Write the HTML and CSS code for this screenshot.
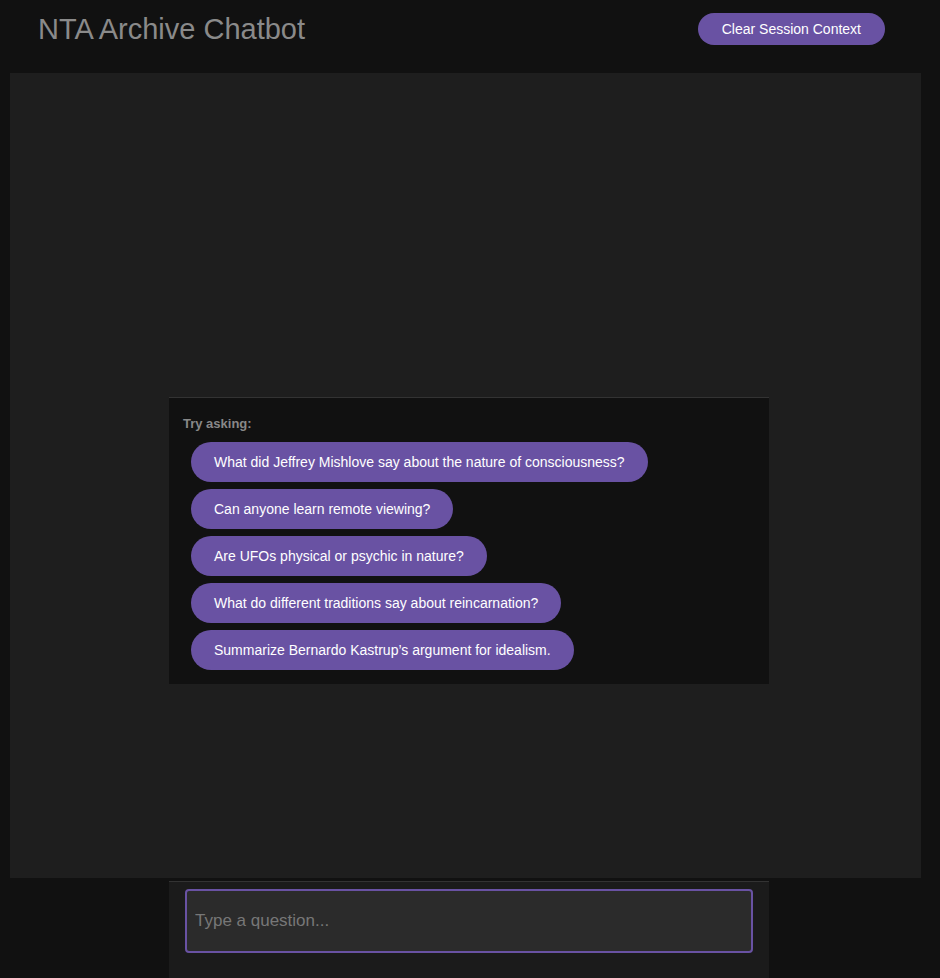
FILE: index.html
```html
<!DOCTYPE html>
<html lang="en">
<head>
<meta charset="utf-8">
<title>NTA Archive Chatbot</title>
<link rel="stylesheet" href="styles.css">
</head>
<body>
<header class="topbar">
  <h1 class="title">NTA Archive Chatbot</h1>
  <button class="clear-btn" type="button">Clear Session Context</button>
</header>
<main class="chat">
  <section class="suggestions">
    <div class="suggest-label">Try asking:</div>
    <div class="suggest-list">
      <button class="suggest" type="button">What did Jeffrey Mishlove say about the nature of consciousness?</button>
      <button class="suggest" type="button">Can anyone learn remote viewing?</button>
      <button class="suggest" type="button">Are UFOs physical or psychic in nature?</button>
      <button class="suggest" type="button">What do different traditions say about reincarnation?</button>
      <button class="suggest" type="button">Summarize Bernardo Kastrup’s argument for idealism.</button>
    </div>
  </section>
</main>
<footer class="composer">
  <input class="question" type="text" placeholder="Type a question..." autofocus>
</footer>
</body>
</html>
```
FILE: styles.css
```css
* { box-sizing: border-box; }
html, body {
  margin: 0;
  padding: 0;
  background: #111111;
  font-family: "Liberation Sans", Arial, sans-serif;
  overflow: hidden;
}
.topbar {
  height: 58px;
  display: flex;
  align-items: center;
  justify-content: space-between;
  padding: 0 55px 0 38px;
}
.title {
  margin: 0;
  font-size: 29px;
  font-weight: 400;
  color: #8a8a8a;
  line-height: 32px;
}
.clear-btn {
  height: 32px;
  padding: 0 24px;
  border: none;
  border-radius: 16px;
  background: #6952a3;
  color: #ffffff;
  font-family: "Liberation Sans", Arial, sans-serif;
  font-size: 14px;
}
.chat {
  margin: 15px 19px 0 10px;
  height: 805px;
  background: #1e1e1e;
  padding-top: 324px;
}
.suggestions {
  width: 600px;
  margin-left: 159px;
  background: #111111;
  border-top: 1px solid #333333;
  padding: 18px 14px 14px 14px;
}
.suggest-label {
  font-size: 13px;
  font-weight: 700;
  line-height: 16px;
  color: #888888;
  margin-bottom: 10px;
}
.suggest-list {
  display: flex;
  flex-direction: column;
  align-items: flex-start;
  gap: 7px;
  padding-left: 8px;
}
.suggest {
  height: 40px;
  padding: 0 23px;
  border: none;
  border-radius: 20px;
  background: #6952a3;
  color: #ffffff;
  font-family: "Liberation Sans", Arial, sans-serif;
  font-size: 14px;
}
.composer {
  width: 600px;
  margin: 3px 0 0 169px;
  background: #1b1b1b;
  border-top: 1px solid #333333;
  padding: 7px 16px 40px 16px;
}
.question {
  display: block;
  width: 568px;
  height: 64px;
  border: 2px solid #6952a3;
  border-radius: 4px;
  background: #2b2b2b;
  color: #dddddd;
  padding: 0 8px;
  font-family: "Liberation Sans", Arial, sans-serif;
  font-size: 17px;
  outline: none;
}
.question::placeholder { color: #777777; }
```
